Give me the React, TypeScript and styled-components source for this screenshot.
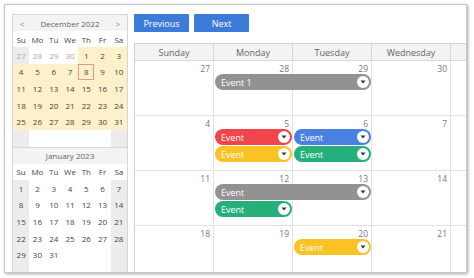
import styled, { createGlobalStyle } from "styled-components";

const GlobalStyle = createGlobalStyle`
  body {
    margin: 0;
    background: #fff;
    font-family: "Open Sans", "Noto Sans", sans-serif;
  }
`;

type Tone = "sel" | "weekend" | "plain";

interface NavDay {
  label: string;
  tone: Tone;
  other?: boolean;
  today?: boolean;
}

const buildDecember = (): NavDay[][] => {
  const rows: NavDay[][] = [];
  const first: NavDay[] = [27, 28, 29, 30].map((d, i) => ({
    label: String(d),
    tone: i === 0 ? "weekend" : "plain",
    other: true,
  }));
  let day = 1;
  while (first.length < 7) first.push({ label: String(day++), tone: "sel" });
  rows.push(first);
  for (let r = 0; r < 4; r++) {
    const row: NavDay[] = [];
    for (let c = 0; c < 7; c++) {
      row.push({ label: String(day), tone: "sel", today: day === 8 });
      day++;
    }
    rows.push(row);
  }
  rows.push(
    Array.from({ length: 7 }, (_, c) => ({
      label: "",
      tone: c === 0 || c === 6 ? "weekend" : "plain",
    }))
  );
  return rows;
};

const buildJanuary = (): NavDay[][] => {
  const rows: NavDay[][] = [];
  let day = 1;
  for (let r = 0; r < 6; r++) {
    const row: NavDay[] = [];
    for (let c = 0; c < 7; c++) {
      row.push({
        label: day <= 31 ? String(day) : "",
        tone: c === 0 || c === 6 ? "weekend" : "plain",
      });
      day++;
    }
    rows.push(row);
  }
  return rows;
};

const DAY_NAMES = ["Su", "Mo", "Tu", "We", "Th", "Fr", "Sa"];
const COLUMNS = ["Sunday", "Monday", "Tuesday", "Wednesday"];

const COLORS: Record<string, string> = {
  gray: "#929292",
  red: "#f2444b",
  yellow: "#fbc226",
  blue: "#4a80e2",
  green: "#25b07b",
};

interface CalEvent {
  col: number;
  span: number;
  line: number;
  color: string;
  text: string;
}

const WEEKS: { days: number[]; events: CalEvent[] }[] = [
  {
    days: [27, 28, 29, 30],
    events: [{ col: 2, span: 2, line: 1, color: "gray", text: "Event 1" }],
  },
  {
    days: [4, 5, 6, 7],
    events: [
      { col: 2, span: 1, line: 1, color: "red", text: "Event" },
      { col: 2, span: 1, line: 2, color: "yellow", text: "Event" },
      { col: 3, span: 1, line: 1, color: "blue", text: "Event" },
      { col: 3, span: 1, line: 2, color: "green", text: "Event" },
    ],
  },
  {
    days: [11, 12, 13, 14],
    events: [
      { col: 2, span: 2, line: 1, color: "gray", text: "Event" },
      { col: 2, span: 1, line: 2, color: "green", text: "Event" },
    ],
  },
  {
    days: [18, 19, 20, 21],
    events: [{ col: 3, span: 1, line: 1, color: "yellow", text: "Event" }],
  },
];

// white round menu hint on the right end of each event
const Caret = () => (
  <svg width="12" height="12" viewBox="0 0 12 12">
    <circle cx="6" cy="6" r="6" fill="#fff" />
    <path d="M3.5 4.6h5L6 7.6z" fill="#333" />
  </svg>
);

const NavMonthView = ({
  title,
  rows,
  arrows,
}: {
  title: string;
  rows: NavDay[][];
  arrows?: boolean;
}) => (
  <NavMonth>
    <MonthTitle>
      <Arrow>{arrows ? "<" : ""}</Arrow>
      <span>{title}</span>
      <Arrow>{arrows ? ">" : ""}</Arrow>
    </MonthTitle>
    <NavGrid>
      {DAY_NAMES.map((d) => (
        <DayName key={d}>{d}</DayName>
      ))}
      {rows.flat().map((d, i) => (
        <NavCell key={i} $tone={d.tone} $other={!!d.other} $today={!!d.today}>
          {d.label}
        </NavCell>
      ))}
    </NavGrid>
  </NavMonth>
);

const App = () => {
  return (
    <>
      <GlobalStyle />
      <Frame>
        <Nav>
          <NavMonthView title="December 2022" rows={buildDecember()} arrows />
          <NavMonthView title="January 2023" rows={buildJanuary()} />
        </Nav>
        <Main>
          <Toolbar>
            <Button>Previous</Button>
            <Button>Next</Button>
          </Toolbar>
          <Month>
            <HeaderRow>
              {COLUMNS.map((c) => (
                <HeaderCell key={c}>{c}</HeaderCell>
              ))}
              <HeaderGutter />
            </HeaderRow>
            {WEEKS.map((w, wi) => (
              <Week key={wi}>
                {w.days.map((d, di) => (
                  <DayCell key={d} $col={di + 1}>
                    {d}
                  </DayCell>
                ))}
                <GutterCell />
                {w.events.map((e, ei) => (
                  <EventBar
                    key={ei}
                    $col={e.col}
                    $span={e.span}
                    $line={e.line}
                    $color={COLORS[e.color]}
                  >
                    <span>{e.text}</span>
                    <Caret />
                  </EventBar>
                ))}
              </Week>
            ))}
          </Month>
        </Main>
      </Frame>
    </>
  );
};

const Frame = styled.div`
  margin: 4px;
  width: 463px;
  height: 269px;
  box-sizing: border-box;
  border: 1px solid #c8c8c8;
  box-shadow: 1px 1px 3px rgba(0, 0, 0, 0.35);
  overflow: hidden;
  display: flex;
  gap: 6px;
  padding: 9px 0 0 7px;
`;

const Nav = styled.div`
  width: 116px;
  flex: none;
  align-self: flex-start;
  box-sizing: border-box;
  border: 1px solid #d6d6d6;
  font-size: 8px;
  color: #444;
`;

const NavMonth = styled.div`
  & + & {
    border-top: 1px solid #d6d6d6;
  }
`;

const MonthTitle = styled.div`
  height: 16px;
  display: flex;
  align-items: center;
  justify-content: space-between;
  padding: 0 6px;
  background: #f3f3f3;
  color: #666;
`;

const Arrow = styled.span`
  width: 6px;
  text-align: center;
  color: #888;
`;

const NavGrid = styled.div`
  display: grid;
  grid-template-columns: repeat(7, 1fr);
  grid-template-rows: 16px;
  grid-auto-rows: 16.67px;
`;

const DayName = styled.div`
  display: flex;
  align-items: center;
  justify-content: center;
  background: #fff;
`;

const NavCell = styled.div<{ $tone: Tone; $other: boolean; $today: boolean }>`
  display: flex;
  align-items: center;
  justify-content: center;
  box-sizing: border-box;
  background: ${(p) =>
    p.$tone === "sel" ? "#fcf1c9" : p.$tone === "weekend" ? "#ececec" : "#fff"};
  color: ${(p) => (p.$other ? "#a8a8a8" : "#444")};
  border: ${(p) => (p.$today ? "1px solid #e59a85" : "none")};
`;

const Main = styled.div`
  flex: 1;
  display: flex;
  flex-direction: column;
  min-width: 0;
`;

const Toolbar = styled.div`
  display: flex;
  gap: 5px;
  height: 18px;
  margin-bottom: 11px;
`;

const Button = styled.button`
  width: 55px;
  height: 18px;
  padding: 0;
  border: none;
  border-radius: 1px;
  background: #3d7bd9;
  color: #fff;
  font-family: "Open Sans", "Noto Sans", sans-serif;
  font-size: 9px;
`;

const Month = styled.div`
  border-left: 1px solid #d2d2d2;
  border-top: 1px solid #d2d2d2;
`;

const HeaderRow = styled.div`
  display: grid;
  grid-template-columns: repeat(4, 79px) 1fr;
  height: 17px;
  background: #f3f3f3;
`;

const HeaderCell = styled.div`
  display: flex;
  align-items: center;
  justify-content: center;
  border-right: 1px solid #d8d8d8;
  border-bottom: 1px solid #d8d8d8;
  font-size: 9px;
  color: #666;
`;

const HeaderGutter = styled.div`
  border-bottom: 1px solid #d8d8d8;
`;

const Week = styled.div`
  display: grid;
  grid-template-columns: repeat(4, 79px) 1fr;
  grid-template-rows: 13px 17px 17px 1fr;
  height: 55px;
`;

const DayCell = styled.div<{ $col: number }>`
  grid-row: 1 / -1;
  grid-column: ${(p) => p.$col};
  border-right: 1px solid #e2e2e2;
  border-bottom: 1px solid #e2e2e2;
  padding: 2px 3px 0 0;
  text-align: right;
  font-size: 8.5px;
  line-height: 11px;
  color: #777;
`;

const GutterCell = styled.div`
  grid-row: 1 / -1;
  grid-column: 5;
  border-bottom: 1px solid #e2e2e2;
`;

const EventBar = styled.div<{
  $col: number;
  $span: number;
  $line: number;
  $color: string;
}>`
  grid-row: ${(p) => p.$line + 1};
  grid-column: ${(p) => p.$col} / span ${(p) => p.$span};
  height: 16px;
  margin: 0 1px 1px 1px;
  border-radius: 8px;
  background: ${(p) => p.$color};
  display: flex;
  align-items: center;
  justify-content: space-between;
  padding: 0 2px 0 6px;
  color: #fff;
  font-size: 9px;
  z-index: 1;

  svg {
    flex: none;
  }
`;

export default App;
